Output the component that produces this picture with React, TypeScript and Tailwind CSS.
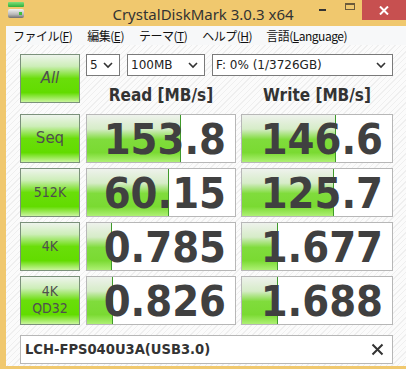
import React from 'react';

interface Row {
  label: string[];
  comic?: boolean;
  read: string;
  write: string;
  readBar: number;
  writeBar: number;
}

const ROWS: Row[] = [
  { label: ['Seq'], comic: true, read: '153.8', write: '146.6', readBar: 94, writeBar: 94 },
  { label: ['512K'], read: '60.15', write: '125.7', readBar: 82, writeBar: 92 },
  { label: ['4K'], read: '0.785', write: '1.677', readBar: 25, writeBar: 36 },
  { label: ['4K', 'QD32'], read: '0.826', write: '1.688', readBar: 26, writeBar: 36 },
];

const MENU = [
  { text: 'ファイル(', key: 'F', ml: 'ml-[7px]' },
  { text: '編集(', key: 'E', ml: 'ml-[15px]' },
  { text: 'テーマ(', key: 'T', ml: 'ml-[15px]' },
  { text: 'ヘルプ(', key: 'H', ml: 'ml-[15px]' },
  { text: '言語(', key: 'L', rest: 'anguage', ml: 'ml-[14px]' },
];

function Chevron() {
  return (
    <svg width="10" height="7" viewBox="0 0 10 7" className="shrink-0">
      <polyline points="1,1 5,5 9,1" fill="none" stroke="#333" strokeWidth="1.6" />
    </svg>
  );
}

function Combo({ text, w }: { text: string; w: string }) {
  return (
    <div className={`${w} h-[22px] bg-white border border-[#7a7a7a] flex items-center justify-between pl-[3px] pr-[6px]`}>
      <span className="text-[12px] text-[#222] font-['DejaVu_Sans',sans-serif]">{text}</span>
      <Chevron />
    </div>
  );
}

function GreenButton({ lines, comic, italic }: { lines: string[]; comic?: boolean; italic?: boolean }) {
  return (
    <div className="w-[60px] h-[49px] shrink-0 border border-[#7b917b] bg-[linear-gradient(180deg,#eef4ec_0%,#cdeeb8_24%,#6ade0a_50%,#62dc00_80%,#caf59e_100%)] flex flex-col items-center justify-center">
      {lines.map((l) => (
        <span
          key={l}
          className={`leading-[17px] text-[#4f4f4f] ${italic ? 'italic' : ''} ${comic ? "text-[15px] font-['DejaVu_Sans',sans-serif]" : "text-[14px] font-['DejaVu_Sans_Condensed','DejaVu_Sans',sans-serif]"}`}
        >
          {l}
        </span>
      ))}
    </div>
  );
}

function ResultBox({ value, bar, w }: { value: string; bar: number; w: string }) {
  return (
    <div className={`${w} h-[49px] shrink-0 relative bg-white border border-[#b7b7b7] flex items-center justify-end pr-[9px] overflow-hidden`}>
      <div
        className="absolute left-0 top-0 bottom-0 border-r border-[#3f9a2a] bg-[linear-gradient(180deg,#eef2ec_0%,#d6ecc8_30%,#80dc3c_52%,#7ada32_80%,#aef074_100%)]"
        style={{ width: bar }}
      />
      <span className="relative mt-[2px] text-[43px] leading-[44px] font-bold text-[#404040] font-['DejaVu_Sans_Condensed','DejaVu_Sans',sans-serif]">
        {value}
      </span>
    </div>
  );
}

export default function App() {
  return (
    <div className="w-[406px] h-[369px] bg-[#f0c86e] flex flex-col overflow-hidden">
      {/* title bar */}
      <div className="h-[26px] shrink-0 grid grid-cols-[96px_1fr_96px]">
        <div className="pl-[8px] pt-[2px] flex flex-col gap-[2px]">
          <div className="w-[16px] h-[5px] rounded-[1px] bg-[linear-gradient(180deg,#7ee07a,#2fae3a)]" />
          <div className="w-[16px] h-[9px] rounded-[2px] bg-[linear-gradient(180deg,#f2f2f2,#b8b8b8_60%,#6f6f6f)] flex items-center justify-end pr-[2px]">
            <div className="w-[3px] h-[3px] bg-[#3fc03a]" />
          </div>
        </div>
        <div className="flex items-start justify-center pt-[3px] text-[15px] text-[#333] font-['Noto_Sans',sans-serif]">
          CrystalDiskMark 3.0.3 x64
        </div>
        <div className="flex items-start justify-end">
          <div className="w-[7px] h-[2px] mt-[9px] bg-[#333] mr-[19px]" />
          <div className="w-[10px] h-[7px] mt-[3px] border border-t-2 border-[#6b5a3a] mr-[7px]" />
          <div className="w-[44px] h-[20px] bg-[#c75050] flex items-center justify-center">
            <svg width="10" height="9" viewBox="0 0 10 9">
              <path d="M1 0.5 L9 8.5 M9 0.5 L1 8.5" stroke="#fff" strokeWidth="2" />
            </svg>
          </div>
        </div>
      </div>

      <div className="flex-1 ml-[6px] mb-[3px] flex flex-col min-h-0">
        {/* menu bar */}
        <div className="h-[19px] shrink-0 bg-[#f7f8f9] flex items-center text-[12px] text-[#111] font-['Noto_Sans_CJK_JP',sans-serif] tracking-[-0.5px]">
          {MENU.map((m) => (
            <span key={m.key} className={m.ml}>
              {m.text}
              <span className="underline">{m.key}</span>
              {m.rest}
              )
            </span>
          ))}
        </div>

        {/* client */}
        <div className="flex-1 pl-[14px] pt-[9px] bg-[repeating-linear-gradient(135deg,#fbfbfb_0px,#fbfbfb_3px,#efefef_3px,#efefef_4px)] flex flex-col">
          <div className="flex">
            <GreenButton lines={['All']} comic italic />
            <div className="ml-[6px] flex flex-col">
              <div className="flex gap-[7px]">
                <Combo text="5" w="w-[34px]" />
                <Combo text="100MB" w="w-[78px]" />
                <Combo text="F: 0% (1/3726GB)" w="w-[181px]" />
              </div>
              <div className="flex gap-[5px] pt-[7px] text-[17px] font-bold text-[#333] font-['DejaVu_Sans_Condensed','DejaVu_Sans',sans-serif]">
                <div className="w-[150px] text-center">Read [MB/s]</div>
                <div className="w-[152px] text-center">Write [MB/s]</div>
              </div>
            </div>
          </div>

          <div className="mt-[5px] flex flex-col gap-[5px]">
            {ROWS.map((r) => (
              <div key={r.read} className="flex">
                <GreenButton lines={r.label} comic={r.comic} />
                <div className="ml-[6px]">
                  <ResultBox value={r.read} bar={r.readBar} w="w-[150px]" />
                </div>
                <div className="ml-[5px]">
                  <ResultBox value={r.write} bar={r.writeBar} w="w-[152px]" />
                </div>
              </div>
            ))}
          </div>

          <div className="mt-[10px] w-[373px] h-[29px] bg-white border border-[#b7b7b7] flex items-center justify-between pl-[4px] pr-[8px]">
            <span className="text-[14.6px] font-bold text-[#333] font-['DejaVu_Sans_Condensed','DejaVu_Sans',sans-serif]">
              LCH-FPS040U3A(USB3.0)
            </span>
            <svg width="13" height="13" viewBox="0 0 13 13">
              <path d="M1.5 1.5 L11.5 11.5 M11.5 1.5 L1.5 11.5" stroke="#333" strokeWidth="2" />
            </svg>
          </div>
        </div>
      </div>
    </div>
  );
}
